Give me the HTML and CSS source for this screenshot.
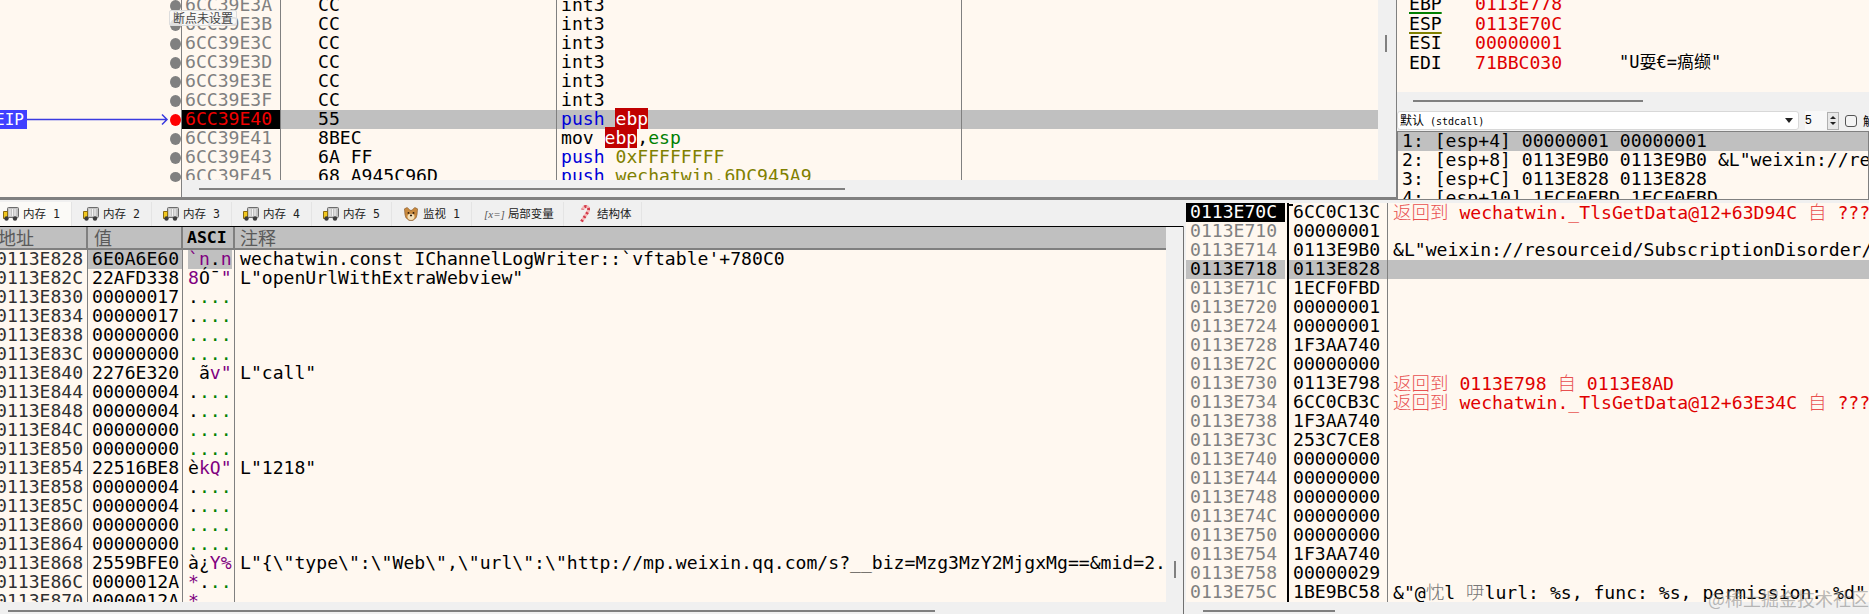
FILE: index.html
```html
<!DOCTYPE html>
<html lang="zh">
<head>
<meta charset="utf-8">
<title>x32dbg</title>
<link rel="stylesheet" href="styles.css">
</head>
<body>
<svg class="defs" width="0" height="0">
  <symbol id="truck" viewBox="0 0 16 14">
    <rect x="4.5" y="0.5" width="11" height="10" rx="1" fill="#c4c4c4" stroke="#6c6c6c"/>
    <path d="M7 2v7M9.5 2v7M12 2v7" stroke="#f4f4f4" stroke-width="1"/>
    <path d="M0.5 4.5h4v7h-4z" fill="#f2c81e" stroke="#8a6a10"/>
    <circle cx="3.5" cy="11.5" r="2.2" fill="#3c3c3c"/>
    <circle cx="12" cy="11.5" r="2.2" fill="#3c3c3c"/>
  </symbol>
  <symbol id="dog" viewBox="0 0 16 15">
    <path d="M1 2l3 -1.5 3 3h2l3 -3 3 1.5 -.5 6 -1 3.500 -3.500 3h-4l-3.500 -3 -1 -3.500z" fill="#c98a3e" stroke="#7a4c1c" stroke-width=".6"/>
    <ellipse cx="8" cy="10.500" rx="3.800" ry="3.300" fill="#f3dfb8"/>
    <circle cx="5.300" cy="6.300" r="1" fill="#2a1a0a"/>
    <circle cx="10.700" cy="6.300" r="1" fill="#2a1a0a"/>
    <ellipse cx="8" cy="9" rx="1.200" ry=".9" fill="#2a1a0a"/>
  </symbol>
  <symbol id="cane" viewBox="0 0 13 18">
    <path d="M2.500 16.500L8.500 7.500C10.500 4.500 9.500 1.500 7 1.500C5 1.500 3.800 3 3.800 4.500" fill="none" stroke="#f4b8b8" stroke-width="3"/>
    <path d="M2.500 16.500L8.500 7.500C10.500 4.500 9.500 1.500 7 1.500C5 1.500 3.800 3 3.800 4.500" fill="none" stroke="#d23a4a" stroke-width="3" stroke-dasharray="2 2.500"/>
  </symbol>
</svg>

<main class="app">
  <section class="top">
    <div class="top-left">
      <div class="gutter">
        <div class="scrolled">
          <div class="g-row"><i class="bp"></i></div>
          <div class="g-row"><i class="bp"></i></div>
          <div class="g-row"><i class="bp"></i></div>
          <div class="g-row"><i class="bp"></i></div>
          <div class="g-row"><i class="bp"></i></div>
          <div class="g-row"><i class="bp"></i></div>
          <div class="g-row">
            <span class="eip">EIP</span>
            <svg class="arrow" width="143" height="19" viewBox="0 0 143 19"><path d="M0 9.500H140M135 4.500l5 5-5 5" fill="none" stroke="#3b3be0" stroke-width="1.500"/></svg>
            <i class="bp red"></i>
          </div>
          <div class="g-row"><i class="bp"></i></div>
          <div class="g-row"><i class="bp"></i></div>
          <div class="g-row"><i class="bp"></i></div>
        </div>
        <div class="tip">断点未设置</div>
      </div>
      <div class="disasm">
        <div class="d-view">
          <div class="scrolled">
            <div class="d-row"><span class="d-a">6CC39E3A</span><span class="d-b">CC</span><span class="d-i">int3</span><span class="d-c"></span></div>
            <div class="d-row"><span class="d-a">6CC39E3B</span><span class="d-b">CC</span><span class="d-i">int3</span><span class="d-c"></span></div>
            <div class="d-row"><span class="d-a">6CC39E3C</span><span class="d-b">CC</span><span class="d-i">int3</span><span class="d-c"></span></div>
            <div class="d-row"><span class="d-a">6CC39E3D</span><span class="d-b">CC</span><span class="d-i">int3</span><span class="d-c"></span></div>
            <div class="d-row"><span class="d-a">6CC39E3E</span><span class="d-b">CC</span><span class="d-i">int3</span><span class="d-c"></span></div>
            <div class="d-row"><span class="d-a">6CC39E3F</span><span class="d-b">CC</span><span class="d-i">int3</span><span class="d-c"></span></div>
            <div class="d-row cur"><span class="d-a">6CC39E40</span><span class="d-b">55</span><span class="d-i"><b class="kw">push</b> <b class="reg">ebp</b></span><span class="d-c"></span></div>
            <div class="d-row"><span class="d-a">6CC39E41</span><span class="d-b">8BEC</span><span class="d-i">mov <b class="reg">ebp</b>,<b class="grn">esp</b></span><span class="d-c"></span></div>
            <div class="d-row"><span class="d-a">6CC39E43</span><span class="d-b">6A FF</span><span class="d-i"><b class="kw">push</b> <b class="olv">0xFFFFFFFF</b></span><span class="d-c"></span></div>
            <div class="d-row"><span class="d-a">6CC39E45</span><span class="d-b">68 A945C96D</span><span class="d-i"><b class="kw">push</b> <b class="olv">wechatwin.6DC945A9</b></span><span class="d-c"></span></div>
          </div>
        </div>
        <div class="hs"><div class="thumb t-dis"></div></div>
      </div>
      <div class="vs v-dis"><div class="vthumb"></div></div>
    </div>

    <div class="top-right">
      <div class="regs">
        <div class="scrolled-r">
          <div class="r-row"><span class="r-n u-g">EBP</span><span class="r-v">0113E778</span></div>
          <div class="r-row"><span class="r-n u-o">ESP</span><span class="r-v">0113E70C</span></div>
          <div class="r-row"><span class="r-n">ESI</span><span class="r-v">00000001</span></div>
          <div class="r-row"><span class="r-n">EDI</span><span class="r-v">71BBC030</span><span class="r-s">"U耍€=瘑缬"</span></div>
        </div>
      </div>
      <div class="hs hs-reg"><div class="thumb t-reg"></div></div>
      <div class="callbar">
        <div class="combo"><span class="combo-t"><span class="cjk12">默认</span> (stdcall)</span><i class="caret"></i></div>
        <div class="spin-in">5</div>
        <div class="spin"><i class="sp-u"></i><i class="sp-d"></i></div>
        <i class="check"></i>
        <span class="check-l">解锁</span>
      </div>
      <div class="args">
        <div class="a-row sel">1: [esp+4] 00000001 00000001</div>
        <div class="a-row">2: [esp+8] 0113E9B0 0113E9B0 &amp;L"weixin://resourceid/SubscriptionDisorder/index.html"</div>
        <div class="a-row">3: [esp+C] 0113E828 0113E828</div>
        <div class="a-row">4: [esp+10] 1ECF0FBD 1ECF0FBD</div>
      </div>
    </div>
  </section>

  <section class="bottom">
    <div class="mem">
      <nav class="tabs">
        <div class="tab on"><svg class="ic"><use href="#truck"/></svg><span>内存 1</span></div>
        <div class="tab"><svg class="ic"><use href="#truck"/></svg><span>内存 2</span></div>
        <div class="tab"><svg class="ic"><use href="#truck"/></svg><span>内存 3</span></div>
        <div class="tab"><svg class="ic"><use href="#truck"/></svg><span>内存 4</span></div>
        <div class="tab"><svg class="ic"><use href="#truck"/></svg><span>内存 5</span></div>
        <div class="tab"><svg class="ic"><use href="#dog"/></svg><span>监视 1</span></div>
        <div class="tab wide"><span class="xeq">[x=]</span><span>局部变量</span></div>
        <div class="tab narrow"><svg class="ic ic-c"><use href="#cane"/></svg><span>结构体</span></div>
      </nav>
      <div class="dump-wrap">
        <div class="dump">
          <div class="m-head"><span class="h-a">地址</span><span class="h-v">值</span><span class="h-s">ASCI</span><span class="h-c">注释</span></div>
          <div class="m-body">
            <div class="m-row"><span class="m-a">0113E828</span><span class="m-v hl">6E0A6E60</span><span class="m-s"><span class="s-hl"><b class="pur">`n</b>.<b class="pur">n</b></span></span><span class="m-c">wechatwin.const IChannelLogWriter::`vftable'+780C0</span></div>
            <div class="m-row"><span class="m-a">0113E82C</span><span class="m-v">22AFD338</span><span class="m-s"><b class="pur">8</b>Ó¯<b class="pur">"</b></span><span class="m-c">L"openUrlWithExtraWebview"</span></div>
            <div class="m-row"><span class="m-a">0113E830</span><span class="m-v">00000017</span><span class="m-s">.<b class="gd">...</b></span><span class="m-c"></span></div>
            <div class="m-row"><span class="m-a">0113E834</span><span class="m-v">00000017</span><span class="m-s">.<b class="gd">...</b></span><span class="m-c"></span></div>
            <div class="m-row"><span class="m-a">0113E838</span><span class="m-v">00000000</span><span class="m-s"><b class="gd">....</b></span><span class="m-c"></span></div>
            <div class="m-row"><span class="m-a">0113E83C</span><span class="m-v">00000000</span><span class="m-s"><b class="gd">....</b></span><span class="m-c"></span></div>
            <div class="m-row"><span class="m-a">0113E840</span><span class="m-v">2276E320</span><span class="m-s"> ã<b class="pur">v"</b></span><span class="m-c">L"call"</span></div>
            <div class="m-row"><span class="m-a">0113E844</span><span class="m-v">00000004</span><span class="m-s">.<b class="gd">...</b></span><span class="m-c"></span></div>
            <div class="m-row"><span class="m-a">0113E848</span><span class="m-v">00000004</span><span class="m-s">.<b class="gd">...</b></span><span class="m-c"></span></div>
            <div class="m-row"><span class="m-a">0113E84C</span><span class="m-v">00000000</span><span class="m-s"><b class="gd">....</b></span><span class="m-c"></span></div>
            <div class="m-row"><span class="m-a">0113E850</span><span class="m-v">00000000</span><span class="m-s"><b class="gd">....</b></span><span class="m-c"></span></div>
            <div class="m-row"><span class="m-a">0113E854</span><span class="m-v">22516BE8</span><span class="m-s">è<b class="pur">kQ"</b></span><span class="m-c">L"1218"</span></div>
            <div class="m-row"><span class="m-a">0113E858</span><span class="m-v">00000004</span><span class="m-s">.<b class="gd">...</b></span><span class="m-c"></span></div>
            <div class="m-row"><span class="m-a">0113E85C</span><span class="m-v">00000004</span><span class="m-s">.<b class="gd">...</b></span><span class="m-c"></span></div>
            <div class="m-row"><span class="m-a">0113E860</span><span class="m-v">00000000</span><span class="m-s"><b class="gd">....</b></span><span class="m-c"></span></div>
            <div class="m-row"><span class="m-a">0113E864</span><span class="m-v">00000000</span><span class="m-s"><b class="gd">....</b></span><span class="m-c"></span></div>
            <div class="m-row"><span class="m-a">0113E868</span><span class="m-v">2559BFE0</span><span class="m-s">à¿<b class="pur">Y%</b></span><span class="m-c">L"{\"type\":\"Web\",\"url\":\"http://mp.weixin.qq.com/s?__biz=Mzg3MzY2MjgxMg==&amp;mid=2.</span></div>
            <div class="m-row"><span class="m-a">0113E86C</span><span class="m-v">0000012A</span><span class="m-s"><b class="pur">*</b>.<b class="gd">..</b></span><span class="m-c"></span></div>
            <div class="m-row"><span class="m-a">0113E870</span><span class="m-v">0000012A</span><span class="m-s"><b class="pur">*</b>.<b class="gd">..</b></span><span class="m-c"></span></div>
          </div>
          <div class="hs hs-m"><div class="thumb t-mem"></div></div>
        </div>
        <div class="vs v-mem"><div class="vthumb"></div></div>
      </div>
    </div>

    <div class="stack">
      <div class="s-body">
        <div class="s-row"><span class="s-a top-a">0113E70C</span><span class="s-v top-v">6CC0C13C</span><span class="s-c red-t"><span class="cjk">返回到</span> wechatwin._TlsGetData@12+63D94C <span class="cjk">自</span> ???</span></div>
        <div class="s-row"><span class="s-a">0113E710</span><span class="s-v">00000001</span><span class="s-c"></span></div>
        <div class="s-row"><span class="s-a">0113E714</span><span class="s-v">0113E9B0</span><span class="s-c">&amp;L"weixin://resourceid/SubscriptionDisorder/index.html"</span></div>
        <div class="s-row sel"><span class="s-a">0113E718</span><span class="s-v">0113E828</span><span class="s-c"></span></div>
        <div class="s-row"><span class="s-a">0113E71C</span><span class="s-v">1ECF0FBD</span><span class="s-c"></span></div>
        <div class="s-row"><span class="s-a">0113E720</span><span class="s-v">00000001</span><span class="s-c"></span></div>
        <div class="s-row"><span class="s-a">0113E724</span><span class="s-v">00000001</span><span class="s-c"></span></div>
        <div class="s-row"><span class="s-a">0113E728</span><span class="s-v">1F3AA740</span><span class="s-c"></span></div>
        <div class="s-row"><span class="s-a">0113E72C</span><span class="s-v">00000000</span><span class="s-c"></span></div>
        <div class="s-row"><span class="s-a">0113E730</span><span class="s-v">0113E798</span><span class="s-c red-t"><span class="cjk">返回到</span> 0113E798 <span class="cjk">自</span> 0113E8AD</span></div>
        <div class="s-row"><span class="s-a">0113E734</span><span class="s-v">6CC0CB3C</span><span class="s-c red-t"><span class="cjk">返回到</span> wechatwin._TlsGetData@12+63E34C <span class="cjk">自</span> ???</span></div>
        <div class="s-row"><span class="s-a">0113E738</span><span class="s-v">1F3AA740</span><span class="s-c"></span></div>
        <div class="s-row"><span class="s-a">0113E73C</span><span class="s-v">253C7CE8</span><span class="s-c"></span></div>
        <div class="s-row"><span class="s-a">0113E740</span><span class="s-v">00000000</span><span class="s-c"></span></div>
        <div class="s-row"><span class="s-a">0113E744</span><span class="s-v">00000000</span><span class="s-c"></span></div>
        <div class="s-row"><span class="s-a">0113E748</span><span class="s-v">00000000</span><span class="s-c"></span></div>
        <div class="s-row"><span class="s-a">0113E74C</span><span class="s-v">00000000</span><span class="s-c"></span></div>
        <div class="s-row"><span class="s-a">0113E750</span><span class="s-v">00000000</span><span class="s-c"></span></div>
        <div class="s-row"><span class="s-a">0113E754</span><span class="s-v">1F3AA740</span><span class="s-c"></span></div>
        <div class="s-row"><span class="s-a">0113E758</span><span class="s-v">00000029</span><span class="s-c"></span></div>
        <div class="s-row"><span class="s-a">0113E75C</span><span class="s-v">1BE9BC58</span><span class="s-c">&amp;"@<span class="cjk gray-c">忱</span>l <span class="cjk gray-c">吚</span>lurl: %s, func: %s, permission: %d"</span></div>
      </div>
      <div class="hs hs-m"><div class="thumb t-stk"></div></div>
    </div>
  </section>
  <div class="mark">@稀土掘金技术社区</div>
</main>
</body>
</html>
```

FILE: styles.css
```css
* { box-sizing: border-box; }
html, body { margin: 0; padding: 0; }
body { width: 1869px; height: 614px; overflow: hidden; background: #f0f0f0; }
.defs { display: block; height: 0; }
b { font-weight: normal; }
i { display: block; }

.app {
  position: relative;
  width: 1869px;
  height: 614px;
  overflow: hidden;
  display: flex;
  flex-direction: column;
  background: #f0f0f0;
  color: #000;
  font: 18.1px/17px "DejaVu Sans Mono", "Noto Sans CJK SC", monospace;
  white-space: nowrap;
}

/* ---------- top ---------- */
.top { height: 200px; display: flex; flex: none; }
.top-left {
  width: 1396px;
  height: 200px;
  display: flex;
  border-bottom: 3px solid #808080;
}
.gutter {
  position: relative;
  z-index: 2;
  width: 182px;
  height: 197px;
  flex: none;
  background: #fff8f0;
  border-right: 1px solid #808080;
}
.scrolled { margin-top: -4px; }
.gutter .scrolled { height: 201px; overflow: hidden; }
.g-row { height: 19px; display: flex; align-items: center; justify-content: flex-end; }
.g-row:last-child .bp { height: 10px; }
.bp { width: 11px; height: 12px; flex: none; border-radius: 50%; background: #808080; }
.bp.red { background: #ff0000; }
.eip {
  flex: none;
  margin-right: auto;
  width: 27px;
  height: 19px;
  background: #4040ff;
  color: #fff;
  font-size: 16px;
  line-height: 19px;
  text-indent: -5px;
  overflow: hidden;
}
.arrow { flex: none; }
.tip {
  position: absolute;
  left: 169px;
  top: 10px;
  font: 12px/14px "Noto Sans CJK SC", sans-serif;
  color: #444;
  background: rgba(248, 248, 248, .8);
  border: 1px solid #ddd;
  border-radius: 2px;
  padding: 0 3px;
}
.disasm { width: 1196px; flex: none; display: flex; flex-direction: column; }
.d-view { height: 180px; overflow: hidden; background: #fff8f0; flex: none; }
.d-row { height: 19px; display: grid; grid-template-columns: 99px 276px 405px 416px; }
.d-a { padding-left: 3px; color: #808080; border-right: 1px solid #808080; }
.d-b { padding-left: 37px; border-right: 1px solid #808080; }
.d-i { padding-left: 4px; border-right: 1px solid #808080; }
.cur .d-a { background: #000; color: #f00000; }
.cur .d-b, .cur .d-i, .cur .d-c { background: #c0c0c0; }
.kw { color: #0000d8; }
.reg { background: #c00000; color: #fff; }
.grn { color: #008000; }
.olv { color: #808000; }

.hs { height: 17px; padding-top: 8px; background: #f0f0f0; flex: none; }
.thumb { height: 2px; background: #808080; }
.t-dis { margin-left: 17px; width: 646px; }
.vs { width: 18px; flex: none; background: #f0f0f0; }
.vthumb { width: 2px; height: 17px; background: #808080; }
.v-dis { padding: 35px 0 0 7px; }

.top-right {
  flex: 1;
  min-width: 0;
  height: 200px;
  overflow: hidden;
  display: flex;
  flex-direction: column;
  border-left: 1px solid #808080;
}
.regs { height: 92px; flex: none; background: #fff8f0; overflow: hidden; }
.scrolled-r { margin-top: -5px; }
.r-row { height: 19.5px; padding-left: 12px; display: flex; }
.r-n { width: 66px; flex: none; text-decoration-thickness: 2px; text-underline-offset: 1.500px; }
.u-g { text-decoration-line: underline; text-decoration-color: #008000; }
.u-o { text-decoration-line: underline; text-decoration-color: #808000; }
.r-v { width: 144px; flex: none; color: #e00000; }
.r-s { font-size: 17px; }
.hs-reg { height: 18px; }
.t-reg { margin-left: 16px; width: 230px; }
.callbar { height: 21px; flex: none; display: flex; align-items: center; }
.combo {
  width: 402px;
  height: 19px;
  flex: none;
  background: #fff;
  border: 1px solid #d8d8d8;
  border-radius: 3px;
  display: flex;
  align-items: center;
  justify-content: space-between;
  padding: 0 5px 0 2px;
}
.combo-t { font: 10px/17px "DejaVu Sans Mono", monospace; }
.cjk12 { font: 12px/17px "Noto Sans CJK SC", sans-serif; }
.caret { width: 0; height: 0; border: 4px solid transparent; border-top: 5px solid #222; border-bottom: 0; }
.spin-in {
  width: 22px;
  height: 19px;
  margin-left: 6px;
  background: #f8f8f8;
  font: 12px/19px "Liberation Sans", sans-serif;
  flex: none;
}
.spin {
  width: 12px;
  height: 18px;
  flex: none;
  border: 1px solid #b0b0b0;
  display: flex;
  flex-direction: column;
  align-items: center;
  justify-content: space-evenly;
  background: #e8e8e8;
}
.sp-u { border: 3px solid transparent; border-bottom: 3px solid #222; border-top: 0; }
.sp-d { border: 3px solid transparent; border-top: 3px solid #222; border-bottom: 0; }
.check {
  width: 12px;
  height: 12px;
  margin-left: 6px;
  flex: none;
  border: 1px solid #555;
  border-radius: 3px;
  background: #f4f4f4;
}
.check-l { margin-left: 6px; font: 12px/19px "Noto Sans CJK SC", sans-serif; }
.args { flex: 1; min-height: 0; background: #fff8f0; overflow: hidden; border: 1px solid #808080; }
.a-row { height: 19px; padding-left: 4px; }
.a-row.sel { background: #c0c0c0; }

/* ---------- bottom ---------- */
.bottom { height: 414px; flex: none; display: flex; }
.mem { width: 1183px; flex: none; display: flex; flex-direction: column; }
.tabs { height: 27px; flex: none; padding-top: 2px; display: flex; border-bottom: 1px solid #000; }
.tab {
  width: 80px;
  height: 24px;
  flex: none;
  display: flex;
  align-items: center;
  gap: 4px;
  padding-left: 11px;
  background: #f0f0f0;
  border-right: 1px solid #e4e4e4;
  font: 11.500px/24px "DejaVu Sans Mono", "Noto Sans CJK SC", monospace;
  color: #222;
}
.tab.on { width: 72px; padding-left: 3px; background: #fbfaf7; }
.tab.wide { width: 92px; gap: 3px; padding-left: 12px; }
.tab.narrow { width: 78px; padding-left: 15px; gap: 5px; }
.ic { width: 16px; height: 14px; flex: none; }
.ic-c { width: 13px; height: 18px; }
.xeq { font: italic 11px/24px "Liberation Serif", serif; color: #555; }
.dump-wrap { flex: 1; min-height: 0; display: flex; }
.dump { width: 1166px; flex: none; display: flex; flex-direction: column; }
.m-head {
  height: 23px;
  flex: none;
  display: grid;
  grid-template-columns: 88px 95px 52px 1fr;
  background: #c0c0c0;
  border-bottom: 2px solid #808080;
  color: #5a5a5a;
  font-family: "Noto Sans CJK SC", sans-serif;
  font-size: 18px;
  line-height: 21px;
}
.m-head span { border-right: 2px solid #808080; overflow: hidden; }
.m-head span:last-child { border-right: 0; }
.h-a { text-indent: -2px; }
.h-v { padding-left: 6px; }
.h-s { padding-left: 4px; color: #000; font: bold 16.5px/21px "DejaVu Sans Mono", monospace; }
.h-c { padding-left: 5px; }
.m-body { flex: 1; min-height: 0; overflow: hidden; background: #fff8f0; }
.m-row { height: 19px; display: grid; grid-template-columns: 88px 95px 52px minmax(0, 1fr); }
.m-a { text-indent: -4px; color: #303030; border-right: 1px solid #808080; }
.m-v { padding-left: 4px; border-right: 1px solid #808080; }
.m-v.hl { background: #c0c0c0; }
.m-s { padding-left: 5px; border-right: 1px solid #808080; white-space: pre; }
.s-hl { background: #c0c0c0; display: block; height: 19px; width: 44px; }
.m-c { padding-left: 5px; }
.pur { color: #800080; }
.gd { color: #008000; }
.hs-m { height: 12px; }
.t-mem { margin-left: 8px; width: 927px; }
.v-mem { width: 17px; padding: 334px 0 0 8px; }

.stack {
  flex: 1;
  min-width: 0;
  display: flex;
  flex-direction: column;
  margin-top: 26px;
  padding-left: 2px;
  border-left: 1px solid #707070;
}
.s-body { flex: 1; min-height: 0; overflow: hidden; background: #fff8f0; margin-top: -23px; }
.s-row { height: 19px; display: grid; grid-template-columns: 101px 101px minmax(0, 1fr); }
.s-a { padding-left: 4px; color: #808080; border-right: 2px solid #fff8f0; }
.s-a.top-a { background: #000; color: #fff; }
.s-v { padding-left: 4px; border-left: 2px solid #000; border-right: 1px solid #808080; }
.top-v { background: linear-gradient(#000, #000) no-repeat 0 1px / 4px 2px; }
.s-c { padding-left: 5px; }
.s-row.sel, .s-row.sel .s-a { background: #c0c0c0; color: #000; }
.red-t { color: #e00000; }
.cjk { font-family: "Noto Sans CJK SC", sans-serif; font-weight: 300; font-size: 18.500px; line-height: 17px; }
.red-t .cjk { color: #e85050; }
.gray-c { color: #777; }
.t-stk { margin-left: 17px; width: 132px; }

.mark {
  position: absolute;
  right: 0;
  bottom: 5px;
  font: 18px/22px "Noto Sans CJK SC", sans-serif;
  color: rgba(130, 130, 130, .55);
}
```
